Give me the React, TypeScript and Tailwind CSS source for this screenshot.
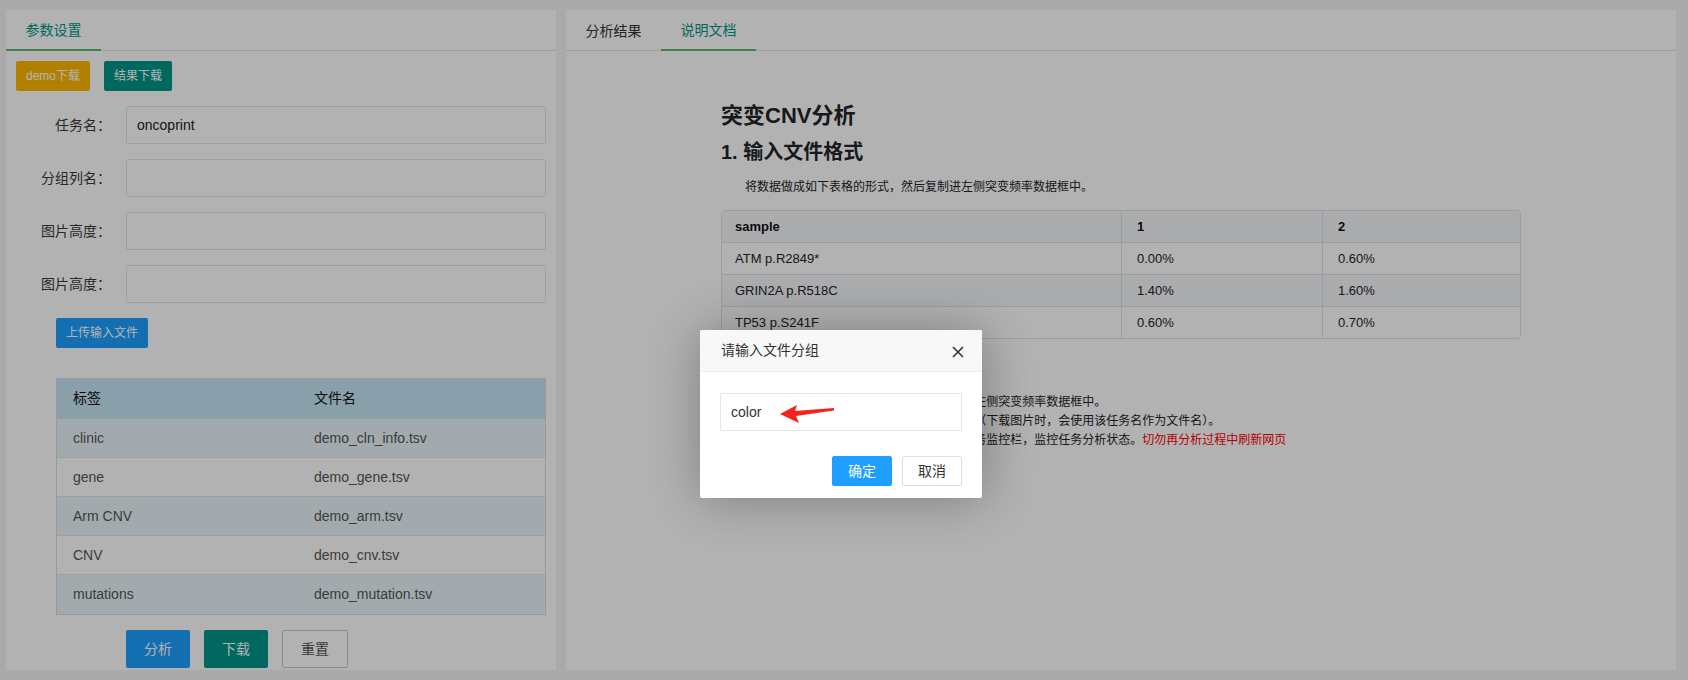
import React from "react";

const fileRows = [
  ["clinic", "demo_cln_info.tsv"],
  ["gene", "demo_gene.tsv"],
  ["Arm CNV", "demo_arm.tsv"],
  ["CNV", "demo_cnv.tsv"],
  ["mutations", "demo_mutation.tsv"],
];

const sampleRows = [
  ["ATM p.R2849*", "0.00%", "0.60%"],
  ["GRIN2A p.R518C", "1.40%", "1.60%"],
  ["TP53 p.S241F", "0.60%", "0.70%"],
];

const formRows = [
  ["任务名：", "oncoprint"],
  ["分组列名：", ""],
  ["图片高度：", ""],
  ["图片高度：", ""],
];

export default function App() {
  return (
    <div className="relative w-[1688px] h-[680px] overflow-hidden bg-[#f4f4f4] font-['Liberation_Sans','Noto_Sans_CJK_SC',sans-serif]">
      <div className="flex gap-[10px] pt-[10px] pl-[6px]">
        {/* Left panel */}
        <div className="w-[550px] h-[660px] bg-white overflow-hidden">
          <div className="flex h-[41px] border-b border-[#e6e6e6]">
            <div className="w-[95px] h-[41px] border-b-2 border-[#5FB878] flex items-center justify-center pt-[2px] text-[14px] text-[#009688]">
              参数设置
            </div>
          </div>
          <div className="px-[10px] pt-[10px]">
            <div className="flex gap-[14px]">
              <button className="h-[30px] px-[10px] bg-[#FFB800] text-white text-[12px] rounded-[2px]">demo下载</button>
              <button className="h-[30px] px-[10px] bg-[#009688] text-white text-[12px] rounded-[2px]">结果下载</button>
            </div>
            <div className="mt-[15px] flex flex-col gap-[15px]">
              {formRows.map(([label, value], i) => (
                <div key={i} className="flex items-center">
                  <div className="w-[95px] text-right text-[14px] text-[#3a3a3a]">{label}</div>
                  <div className="ml-[15px] flex-1 h-[38px] border border-[#e6e6e6] rounded-[2px] px-[10px] flex items-center text-[14px] text-[#222]">
                    {value}
                  </div>
                </div>
              ))}
            </div>
            <button className="mt-[15px] ml-[40px] h-[30px] px-[10px] bg-[#1E9FFF] text-white text-[12px] rounded-[2px]">上传输入文件</button>
            <div className="mt-[30px] ml-[40px] w-[490px] border border-[#dcdcdc] text-[14px]">
              <div className="flex h-[40px] items-center bg-[#c4e4f4] border-b border-[#d8e2e8] text-[#111]">
                <div className="w-[241px] pl-[16px]">标签</div>
                <div className="pl-[16px]">文件名</div>
              </div>
              {fileRows.map(([a, b], i) => (
                <div
                  key={i}
                  className={
                    "flex items-center text-[#555] " +
                    (i % 2 === 0 ? "bg-[#eaf4fa] " : "bg-white ") +
                    (i < fileRows.length - 1 ? "h-[39px] border-b border-[#dde6eb]" : "h-[39px]")
                  }
                >
                  <div className="w-[241px] pl-[16px]">{a}</div>
                  <div className="pl-[16px]">{b}</div>
                </div>
              ))}
            </div>
            <div className="mt-[15px] ml-[110px] flex gap-[14px]">
              <button className="h-[38px] w-[64px] bg-[#1E9FFF] text-white text-[14px] rounded-[2px]">分析</button>
              <button className="h-[38px] w-[64px] bg-[#009688] text-white text-[14px] rounded-[2px]">下载</button>
              <button className="h-[38px] w-[66px] bg-white border border-[#c9c9c9] text-[#555] text-[14px] rounded-[2px]">重置</button>
            </div>
          </div>
        </div>

        {/* Right panel */}
        <div className="w-[1110px] h-[660px] bg-white overflow-hidden">
          <div className="flex h-[41px] border-b border-[#e6e6e6] text-[14px]">
            <div className="w-[95px] h-[41px] flex items-center justify-center pt-[2px] text-[#333]">分析结果</div>
            <div className="w-[95px] h-[41px] border-b-2 border-[#5FB878] flex items-center justify-center pt-[2px] text-[#009688]">说明文档</div>
          </div>
          <div className="w-[800px] mx-auto pt-[52px] text-[#212529]">
            <h1 className="text-[22px] leading-[26px] font-bold">突变CNV分析</h1>
            <h2 className="mt-[11px] text-[20px] leading-[24px] font-bold">1. 输入文件格式</h2>
            <p className="mt-[14px] text-[12px] leading-[18px] indent-[24px]">将数据做成如下表格的形式，然后复制进左侧突变频率数据框中。</p>
            <div className="mt-[14px] border border-[#dee2e6] rounded-[4px] overflow-hidden text-[13px]">
              <div className="grid grid-cols-[399px_201px_1fr] h-[32px] bg-[#f5f6f8] border-b border-[#dee2e6] font-bold text-[#111]">
                <div className="pl-[13px] flex items-center">sample</div>
                <div className="pl-[15px] flex items-center border-l border-[#dee2e6]">1</div>
                <div className="pl-[15px] flex items-center border-l border-[#dee2e6]">2</div>
              </div>
              {sampleRows.map(([a, b, c], i) => (
                <div
                  key={i}
                  className={
                    "grid grid-cols-[399px_201px_1fr] " +
                    (i % 2 === 1 ? "bg-[#f5f6f8] " : "bg-white ") +
                    (i < sampleRows.length - 1 ? "h-[32px] border-b border-[#dee2e6]" : "h-[31px]")
                  }
                >
                  <div className="pl-[13px] flex items-center">{a}</div>
                  <div className="pl-[15px] flex items-center border-l border-[#dee2e6]">{b}</div>
                  <div className="pl-[15px] flex items-center border-l border-[#dee2e6]">{c}</div>
                </div>
              ))}
            </div>
            <div className="mt-[54px] text-[12px] leading-[19px] pl-[24px]">
              <div>1. 将数据做成如下表格的形式，然后复制进左侧突变频率数据框中。</div>
              <div>2. 在左侧任务名处填写本次分析的任务名称（下载图片时，会使用该任务名作为文件名）。</div>
              <div>
                3. 点击分析按钮后，结果会显示在右侧的任务监控栏，监控任务分析状态。
                <span className="text-[#ff0000]">切勿再分析过程中刷新网页</span>
              </div>
            </div>
          </div>
        </div>
      </div>

      {/* Modal shade */}
      <div className="absolute inset-0 bg-black/30" />

      {/* Dialog */}
      <div className="absolute left-[700px] top-[330px] w-[282px] bg-white rounded-[2px] shadow-[1px_1px_50px_rgba(0,0,0,0.3)]">
        <div className="relative h-[42px] bg-[#f8f8f8] border-b border-[#eeeeee] rounded-t-[2px] pl-[21px] flex items-center text-[14px] text-[#333]">
          请输入文件分组
          <svg className="absolute right-[18px] top-[16px]" width="12" height="12" viewBox="0 0 12 12">
            <path d="M1 1 L11 11 M11 1 L1 11" stroke="#333" strokeWidth="1.6" fill="none" />
          </svg>
        </div>
        <div className="px-[20px] pt-[21px]">
          <div className="h-[38px] border border-[#e6e6e6] px-[10px] flex items-center text-[14px] text-[#333]">color</div>
        </div>
        <div className="mt-[25px] pb-[12px] pr-[20px] flex justify-end gap-[10px]">
          <button className="h-[30px] w-[60px] bg-[#1E9FFF] border border-[#1E9FFF] text-white text-[14px] rounded-[2px]">确定</button>
          <button className="h-[30px] w-[60px] bg-white border border-[#dedede] text-[#333] text-[14px] rounded-[2px]">取消</button>
        </div>
        <svg className="absolute left-[78px] top-[71px]" width="60" height="24" viewBox="0 0 60 24">
          <polygon points="2,13 19,4 17,10 56,7 56,9.5 18,15 21,22" fill="#f5231b" />
        </svg>
      </div>
    </div>
  );
}
